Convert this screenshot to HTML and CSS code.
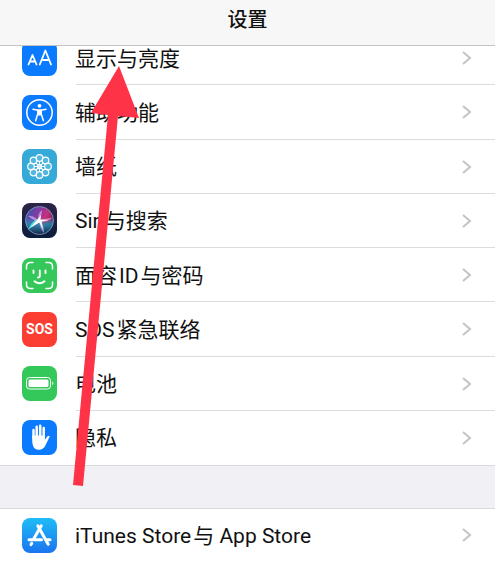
FILE: index.html
```
<!DOCTYPE html>
<html lang="zh-CN">
<head>
    <meta charset="UTF-8">
    <meta name="viewport" content="width=device-width, initial-scale=1.0">
    <title>设置</title>
    <link rel="stylesheet" href="styles.css">
</head>
<body>

    <header class="navbar">
        <h1>设置</h1>
    </header>

    <main class="settings">
        <!-- Device settings -->
        <nav class="group group-device">
            <a class="row" href="#display">
                <svg class="icon" viewBox="0 0 35 35">
                    <rect width="35" height="35" rx="8" fill="#0a7aff"/>
                    <g fill="none" stroke="#fff" stroke-width="1.800" stroke-linejoin="round" stroke-linecap="round">
                        <path d="M6.500 23.500l4-9.500 4 9.500M7.800 20.500h5.400"/>
                        <path d="M17.800 23.500l5.600-14 5.600 14M19.600 19h7.600"/>
                    </g>
                </svg>
                <span class="label">显示与亮度</span>
                <svg class="chevron" viewBox="0 0 10 16"><path d="M1 2l7 6-7 6"/></svg>
            </a>
            <a class="row" href="#accessibility">
                <svg class="icon" viewBox="0 0 35 35">
                    <rect width="35" height="35" rx="8" fill="#0a7aff"/>
                    <circle cx="17.500" cy="17.500" r="12.700" fill="none" stroke="#fff" stroke-width="1.500"/>
                    <circle cx="17.500" cy="10.800" r="1.900" fill="#fff"/>
                    <path d="M11 14.300l4.800.9v3.600l-2.200 7M24 14.300l-4.800.9v3.600l2.200 7" fill="none" stroke="#fff" stroke-width="1.500" stroke-linecap="round" stroke-linejoin="round"/>
                    <path d="M15.300 14.300h4.400v5.200l-1 1h-2.400l-1-1z" fill="#fff"/>
                </svg>
                <span class="label">辅助功能</span>
                <svg class="chevron" viewBox="0 0 10 16"><path d="M1 2l7 6-7 6"/></svg>
            </a>
            <a class="row" href="#wallpaper">
                <svg class="icon" viewBox="0 0 35 35">
                    <rect width="35" height="35" rx="8" fill="#35a9d8"/>
                    <g fill="#8fd0ea" fill-opacity=".35" stroke="#fff" stroke-width="1.200">
                        <circle cx="17.500" cy="9" r="3.300"/>
                        <circle cx="23.500" cy="11.500" r="3.300"/>
                        <circle cx="26" cy="17.500" r="3.300"/>
                        <circle cx="23.500" cy="23.500" r="3.300"/>
                        <circle cx="17.500" cy="26" r="3.300"/>
                        <circle cx="11.500" cy="23.500" r="3.300"/>
                        <circle cx="9" cy="17.500" r="3.300"/>
                        <circle cx="11.500" cy="11.500" r="3.300"/>
                        <path d="M17.500 12.500v10M12.500 17.500h10M14 14l7 7M21 14l-7 7"/>
                        <circle cx="17.500" cy="17.500" r="2"/>
                    </g>
                </svg>
                <span class="label">墙纸</span>
                <svg class="chevron" viewBox="0 0 10 16"><path d="M1 2l7 6-7 6"/></svg>
            </a>
            <a class="row" href="#siri">
                <svg class="icon" viewBox="0 0 35 35">
                    <defs>
                        <linearGradient id="siri-bg" x1="0" y1="0" x2="0" y2="1">
                            <stop offset="0" stop-color="#2c2548"/>
                            <stop offset="1" stop-color="#0c1c3c"/>
                        </linearGradient>
                        <linearGradient id="siri-orb" x1="0" y1=".2" x2="1" y2=".7">
                            <stop offset="0" stop-color="#3554b8"/>
                            <stop offset=".4" stop-color="#8a3a9c"/>
                            <stop offset=".65" stop-color="#c8307c"/>
                            <stop offset="1" stop-color="#3a2450"/>
                        </linearGradient>
                        <linearGradient id="siri-low" x1="0" y1="0" x2="0" y2="1">
                            <stop offset=".4" stop-color="#18b8c8" stop-opacity="0"/>
                            <stop offset=".65" stop-color="#1890b0" stop-opacity=".8"/>
                            <stop offset="1" stop-color="#102040"/>
                        </linearGradient>
                    </defs>
                    <rect width="35" height="35" rx="8" fill="url(#siri-bg)"/>
                    <circle cx="17.500" cy="17.500" r="14" fill="url(#siri-orb)"/>
                    <circle cx="17.500" cy="17.500" r="14" fill="url(#siri-low)" stroke="#7fa0c8" stroke-width=".8"/>
                    <path d="M17.500 17l13-2.500q-5 5-13 4.500z" fill="#ff7fb8" fill-opacity=".8"/>
                    <path d="M18 17L6 27q3-8 9-11z" fill="#4ff0e0" fill-opacity=".85"/>
                    <path d="M17 16q3-3 3-9-4 3-4 9zM15 16q-5-4-9-3 3 3 9 5zM17 18q1 8 5 12 0-7-3-12z" fill="#d8c4ff" fill-opacity=".6"/>
                    <path d="M8 25l8-9 3-4-.5 4.500 8.500.5-7.500 1.500 1.500 8-3.500-7z" fill="#fff"/>
                </svg>
                <span class="label">Siri与搜索</span>
                <svg class="chevron" viewBox="0 0 10 16"><path d="M1 2l7 6-7 6"/></svg>
            </a>
            <a class="row" href="#faceid">
                <svg class="icon" viewBox="0 0 35 35">
                    <rect width="35" height="35" rx="8" fill="#34c759"/>
                    <g fill="none" stroke="#fff" stroke-width="1.500" stroke-linecap="round">
                        <path d="M4.500 11V8.500q0-4 4-4H11M24 4.500h2.500q4 0 4 4V11M30.500 24v2.500q0 4-4 4H24M11 30.500H8.500q-4 0-4-4V24"/>
                        <path d="M11.500 12.500v2.500M23.500 12.500v2.500M17.800 12.500v5.500q0 1.500-1.800 1.500M12.500 23.300q5 4 10 0" stroke-width="1.900"/>
                    </g>
                </svg>
                <span class="label">面容<span class="latin">ID</span>与密码</span>
                <svg class="chevron" viewBox="0 0 10 16"><path d="M1 2l7 6-7 6"/></svg>
            </a>
            <a class="row" href="#sos">
                <span class="icon icon-sos">SOS</span>
                <span class="label"><span class="latin-start">SOS</span>紧急联络</span>
                <svg class="chevron" viewBox="0 0 10 16"><path d="M1 2l7 6-7 6"/></svg>
            </a>
            <a class="row" href="#battery">
                <svg class="icon" viewBox="0 0 35 35">
                    <rect width="35" height="35" rx="8" fill="#34c759"/>
                    <rect x="4.500" y="11.500" width="24" height="11.500" rx="3" fill="none" stroke="#fff" stroke-width="1"/>
                    <rect x="6.500" y="13.500" width="20" height="7.500" rx="1.500" fill="#fff"/>
                    <path d="M30.300 15.300q2.200 2 0 4z" fill="#fff"/>
                </svg>
                <span class="label">电池</span>
                <svg class="chevron" viewBox="0 0 10 16"><path d="M1 2l7 6-7 6"/></svg>
            </a>
            <a class="row" href="#privacy">
                <svg class="icon" viewBox="0 0 35 35">
                    <rect width="35" height="35" rx="8" fill="#0a7aff"/>
                    <path d="M11.500 18V10M14.700 17V6.800M18.200 17V5.800M21.700 18V8" stroke="#fff" stroke-width="2.500" stroke-linecap="round"/>
                    <path d="M10.200 15.500h12.700v4.300l2.300-3.300q1.300-1.200 2.600-.2l-4.300 9q-2 4.400-6.500 4.400-5.200 0-6.400-5.500-.6-3-.4-8.700z" fill="#fff"/>
                </svg>
                <span class="label">隐私</span>
                <svg class="chevron" viewBox="0 0 10 16"><path d="M1 2l7 6-7 6"/></svg>
            </a>
        </nav>

        <!-- Store settings -->
        <nav class="group group-store">
            <a class="row" href="#store">
                <svg class="icon" viewBox="0 0 35 35">
                    <defs>
                        <linearGradient id="store-bg" x1="0" y1="0" x2="0" y2="1">
                            <stop offset="0" stop-color="#1ebdf6"/>
                            <stop offset="1" stop-color="#1b74f0"/>
                        </linearGradient>
                    </defs>
                    <rect width="35" height="35" rx="8" fill="url(#store-bg)"/>
                    <path d="M19.300 7.800l-8.100 14M15.800 7.800l10.400 18.400M9.700 25.400l-.7 1.200M7 21.800h12.500M24.500 21.800H28" fill="none" stroke="#fff" stroke-width="3" stroke-linecap="round"/>
                </svg>
                <span class="label"><span class="latin-start">iTunes Store</span>与 App Store</span>
                <svg class="chevron" viewBox="0 0 10 16"><path d="M1 2l7 6-7 6"/></svg>
            </a>
        </nav>
    </main>

    <!-- Arrow pointing at the display row -->
    <svg class="arrow" width="48" height="420" viewBox="91 66 48 420">
        <path d="M119 66l20 52-21-2-35 370-10-1 35-370-17-2z"/>
    </svg>

</body>
</html>
```
FILE: styles.css
```
* {
    box-sizing: border-box;
}
body {
    margin: 0;
    min-height: 100vh;
    position: relative;
    background-color: #f0f0f5;
    color: #111;
    font-family: Roboto, 'Noto Sans CJK SC', sans-serif;
    font-size: 21px;
}
.navbar {
    position: absolute;
    top: 0;
    left: 0;
    right: 0;
    z-index: 1;
    height: 46px;
    padding-bottom: 6px;
    display: flex;
    align-items: center;
    justify-content: center;
    background-color: #f7f7f7;
    border-bottom: 1px solid #c4c4c6;
}
h1 {
    margin: 0;
    font-size: 20px;
    font-weight: 500;
    line-height: 24px;
}
/* the list is scrolled a little way under the navbar */
.settings {
    padding-top: 31px;
}
.group {
    display: grid;
    grid-auto-rows: 1fr;
    background-color: #fff;
}
.group-device {
    height: 435px;
    margin-bottom: 42px;
    border-bottom: 1px solid #d9d9dd;
}
.group-store {
    height: 53px;
    border-top: 1px solid #d9d9dd;
}
.row {
    position: relative;
    display: flex;
    align-items: center;
    padding: 0 23px 0 22px;
    color: inherit;
    text-decoration: none;
}
.row:not(:last-child)::after {
    content: '';
    position: absolute;
    left: 76px;
    right: 0;
    bottom: 0;
    height: 1px;
    background-color: #dcdcde;
}
.icon {
    width: 35px;
    height: 35px;
    margin-right: 18px;
    flex: none;
}
.icon-sos {
    display: flex;
    align-items: center;
    justify-content: center;
    border-radius: 8px;
    background-color: #fc3d32;
    color: #fff;
    font-size: 14px;
    font-weight: 700;
}
.label {
    flex: 1;
    padding-top: 1px;
    line-height: 28px;
    white-space: nowrap;
}
.latin {
    margin: 0 2px;
}
.latin-start {
    margin-right: 2px;
}
.chevron {
    width: 10px;
    height: 16px;
    flex: none;
    fill: none;
    stroke: #c4c4c7;
    stroke-width: 2;
}
.arrow {
    position: absolute;
    top: 66px;
    left: 91px;
    z-index: 2;
    overflow: visible;
    fill: #ff3347;
    pointer-events: none;
}
```
